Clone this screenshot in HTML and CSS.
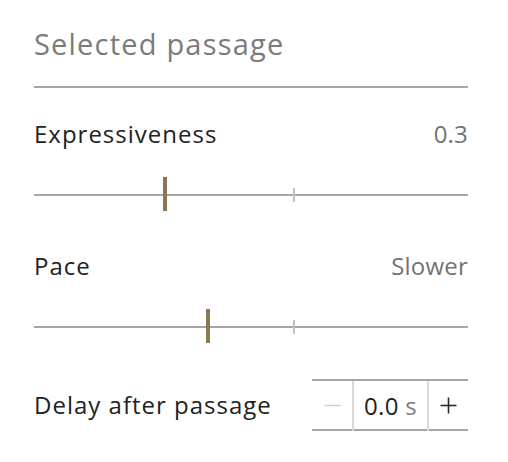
FILE: index.html
```html
<!DOCTYPE html>
<html>
<head>
<meta charset="utf-8">
<link rel="stylesheet" href="styles.css">
</head>
<body>
<div class="panel">
  <h2 class="title">Selected passage</h2>
  <div class="field">
    <div class="row">
      <span class="label">Expressiveness</span>
      <span class="value">0.3</span>
    </div>
    <div class="slider">
      <div class="track"></div>
      <div class="tick" style="left: 60%"></div>
      <div class="thumb" style="left: 30.2%"></div>
    </div>
  </div>
  <div class="field">
    <div class="row">
      <span class="label">Pace</span>
      <span class="value">Slower</span>
    </div>
    <div class="slider">
      <div class="track"></div>
      <div class="tick" style="left: 60%"></div>
      <div class="thumb" style="left: 40.1%"></div>
    </div>
  </div>
  <div class="row delay">
    <span class="label">Delay after passage</span>
    <div class="stepper">
      <span class="step minus" aria-label="Decrease">
        <svg width="17" height="17" viewBox="0 0 17 17"><line x1="0.5" y1="8.5" x2="16.5" y2="8.5" stroke="#cccccc" stroke-width="1.5"/></svg>
      </span>
      <span class="step num">0.0<span class="unit"> s</span></span>
      <span class="step plus" aria-label="Increase">
        <svg width="17" height="17" viewBox="0 0 17 17"><line x1="0.5" y1="8.5" x2="16.5" y2="8.5" stroke="#2a2a2a" stroke-width="1.6"/><line x1="8.5" y1="0.5" x2="8.5" y2="16.5" stroke="#2a2a2a" stroke-width="1.6"/></svg>
      </span>
    </div>
  </div>
</div>
</body>
</html>
```

FILE: styles.css
```css
html, body {
  margin: 0;
  padding: 0;
  background: #ffffff;
}
body {
  font-family: "Open Sans", "Noto Sans", sans-serif;
  color: #222222;
}
.panel {
  width: 434px;
  padding: 25px 40px 0 34px;
}
.title {
  margin: 0;
  font-size: 29px;
  font-weight: 400;
  line-height: 38px;
  letter-spacing: 1.2px;
  color: #7b7b7b;
  padding-bottom: 23px;
  border-bottom: 2px solid #a6a6a6;
}
.field {
  margin-top: 30px;
}
.field + .field {
  margin-top: 39px;
}
.row {
  display: flex;
  justify-content: space-between;
  align-items: center;
}
.label {
  font-size: 24px;
  line-height: 32px;
  letter-spacing: 1px;
  color: #222222;
}
.value {
  font-size: 24px;
  line-height: 32px;
  letter-spacing: 0.2px;
  color: #737373;
}
.slider {
  position: relative;
  height: 34px;
  margin-top: 27px;
}
.track {
  position: absolute;
  left: 0;
  right: 0;
  top: 17px;
  height: 2px;
  background: #a6a6a6;
}
.tick {
  position: absolute;
  top: 11px;
  width: 2px;
  height: 14px;
  margin-left: -1px;
  background: #c2c2c2;
}
.thumb {
  position: absolute;
  top: 0;
  width: 4px;
  height: 34px;
  margin-left: -2px;
  background: #8b7656;
}
.delay {
  margin-top: 36px;
}
.stepper {
  display: flex;
  height: 48px;
  border-top: 2px solid #a6a6a6;
  border-bottom: 2px solid #a6a6a6;
}
.step {
  display: flex;
  align-items: center;
  justify-content: center;
  margin-bottom: -3px;
  padding-bottom: 3px;
}
.step svg {
  display: block;
}
.minus {
  width: 40px;
  border-right: 2px solid #d9d9d9;
}
.num {
  width: 73px;
  font-size: 24px;
  letter-spacing: 0.3px;
  color: #222222;
  border-right: 2px solid #d9d9d9;
}
.unit {
  color: #7b7b7b;
  white-space: pre;
}
.plus {
  width: 39px;
}
```
